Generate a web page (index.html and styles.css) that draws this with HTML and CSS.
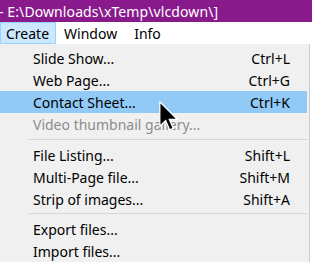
FILE: index.html
```html
<!DOCTYPE html>
<html lang="en">
<head>
    <meta charset="UTF-8">
    <title>Create menu</title>
    <link rel="stylesheet" href="styles.css">
</head>
<body>
    <div class="titlebar">
        <span class="title">- E:\Downloads\xTemp\vlcdown\]</span>
    </div>
    <div class="menubar">
        <span class="menu-item active">Create</span>
        <span class="menu-item">Window</span>
        <span class="menu-item">Info</span>
    </div>
    <div class="dropdown">
        <div class="entry"><span>Slide Show...</span><span>Ctrl+L</span></div>
        <div class="entry"><span>Web Page...</span><span>Ctrl+G</span></div>
        <div class="entry hover"><span>Contact Sheet...</span><span>Ctrl+K</span></div>
        <div class="entry disabled"><span>Video thumbnail gallery...</span><span></span></div>
        <div class="separator"></div>
        <div class="entry"><span>File Listing...</span><span>Shift+L</span></div>
        <div class="entry"><span>Multi-Page file...</span><span>Shift+M</span></div>
        <div class="entry"><span>Strip of images...</span><span>Shift+A</span></div>
        <div class="separator short"></div>
        <div class="entry"><span>Export files...</span><span></span></div>
        <div class="entry"><span>Import files...</span><span></span></div>
    </div>

    <!-- mouse pointer over the menu -->
    <svg class="cursor" width="19" height="30" viewBox="0 0 12 19">
        <path d="M0.5 0.5 L0.5 16 L4.2 12.4 L6.8 18.3 L9 17.3 L6.5 11.6 L11.5 11.6 Z"
              fill="#000" stroke="#fff" stroke-width="0.8" stroke-linejoin="miter"/>
    </svg>
</body>
</html>
```

FILE: styles.css
```css
body {
    margin: 0;
    width: 312px;
    height: 262px;
    overflow: hidden;
    background-color: #fff;
    font-family: 'Noto Sans', 'Open Sans', sans-serif;
    font-size: 14px;
    color: #000;
    position: relative;
}
.titlebar {
    height: 22px;
    background-color: #891a8c;
    color: #fff;
    display: flex;
    align-items: center;
    white-space: nowrap;
    font-size: 14px;
}
.title {
    margin-left: -1px;
    letter-spacing: 0.1px;
}
.menubar {
    height: 22px;
    display: flex;
    align-items: stretch;
    background-color: #fff;
}
.menu-item {
    display: flex;
    align-items: center;
    padding: 0 8px 0 7px;
    border: 1px solid transparent;
}
.menu-item.active {
    background-color: #cce8ff;
    border-color: #99d1ff;
    padding-left: 5px;
    padding-right: 6px;
}
.dropdown {
    width: 307px;
    padding: 3px 2px 0 0;
    height: 215px;
    background-color: #f0f0f0;
    border-right: 1px solid #cccccc;
}
.entry {
    height: 22px;
    display: flex;
    align-items: center;
    justify-content: space-between;
    padding: 0 17px 0 33px;
    white-space: nowrap;
}
.entry.hover {
    background-color: #91c9f7;
}
.entry.disabled {
    color: #8d8d8d;
}
.separator {
    height: 9px;
    margin-left: 29px;
    position: relative;
}
.separator.short {
    height: 8px;
}
.separator::after {
    content: '';
    position: absolute;
    left: 0;
    right: 0;
    top: 4px;
    height: 1px;
    background-color: #d7d7d7;
}
.short::after {
    top: 3px;
}
.cursor {
    position: absolute;
    left: 159px;
    top: 101px;
}
```
